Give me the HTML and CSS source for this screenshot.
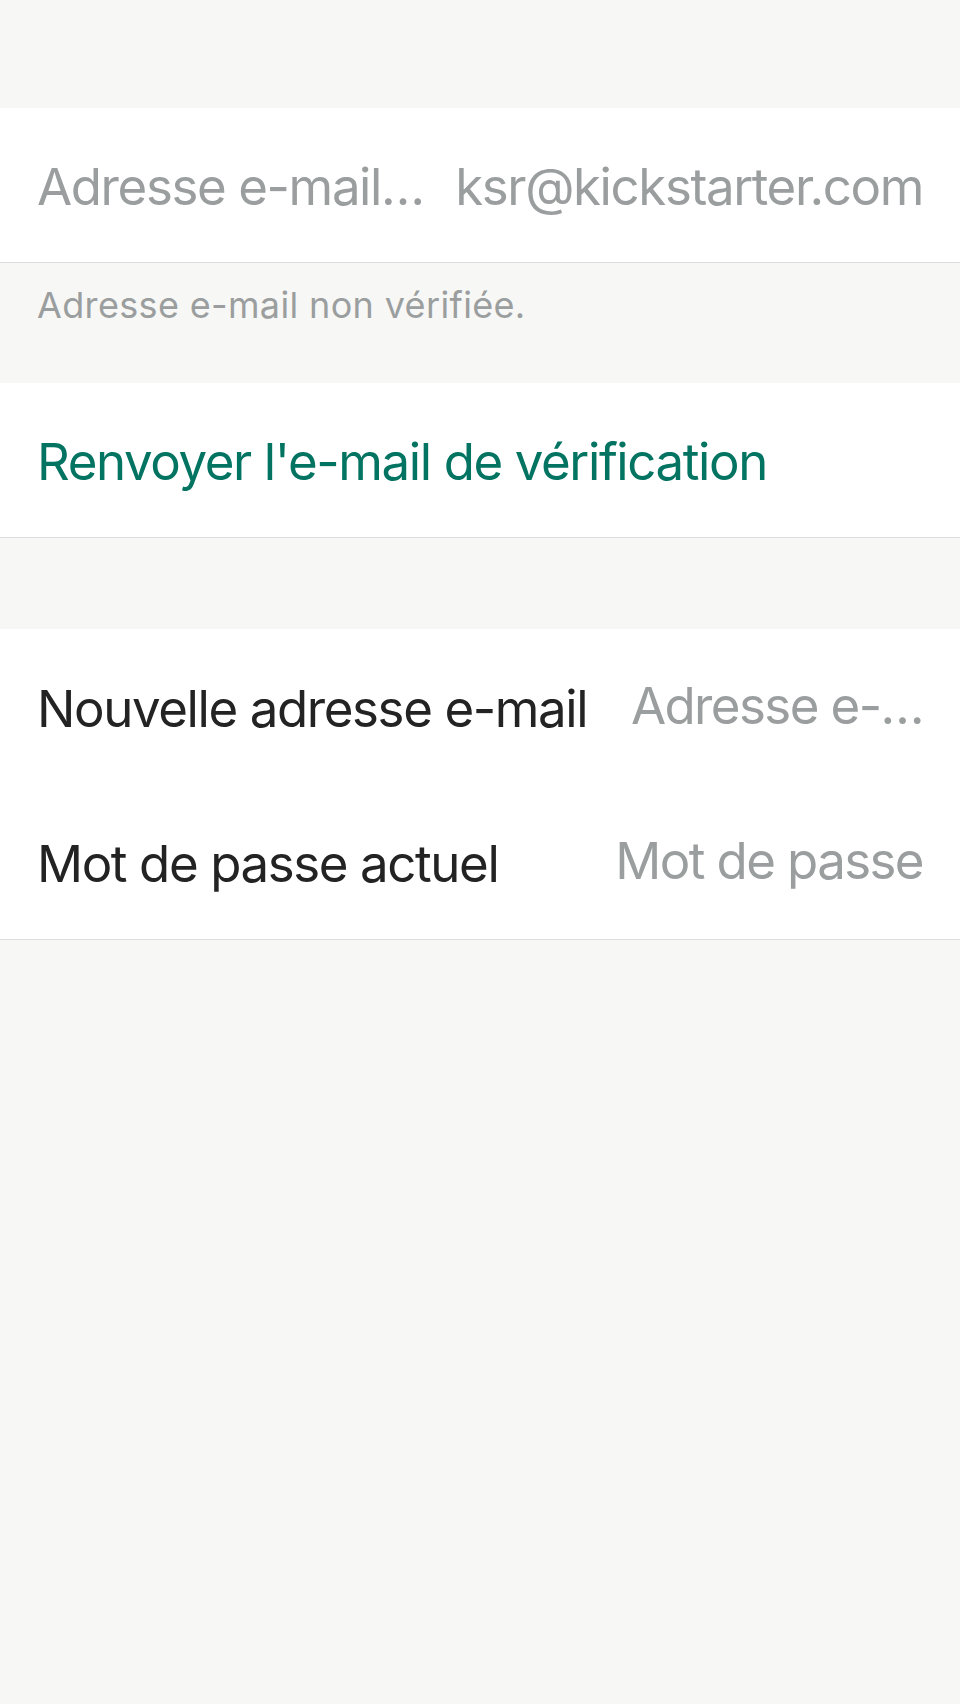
FILE: index.html
```html
<!DOCTYPE html>
<html lang="fr">
<head>
<meta charset="utf-8">
<title>Modifier l'adresse e-mail</title>
<link rel="stylesheet" href="styles.css">
</head>
<body>
<main class="screen">
  <div class="spacer-top"></div>
  <section class="group">
    <div class="row row-bordered">
      <span class="label muted">Adresse e-mail…</span>
      <span class="value muted">ksr@kickstarter.com</span>
    </div>
  </section>
  <p class="footnote">Adresse e-mail non vérifiée.</p>
  <section class="group">
    <div class="row row-bordered">
      <span class="action">Renvoyer l'e-mail de vérification</span>
    </div>
  </section>
  <div class="spacer-mid"></div>
  <section class="group group-bordered">
    <div class="row">
      <span class="label">Nouvelle adresse e-mail</span>
      <span class="value placeholder">Adresse e-…</span>
    </div>
    <div class="row">
      <span class="label">Mot de passe actuel</span>
      <span class="value placeholder">Mot de passe</span>
    </div>
  </section>
</main>
</body>
</html>
```

FILE: styles.css
```css
* { box-sizing: border-box; }
html, body {
  margin: 0;
  padding: 0;
  background: #f7f7f6;
}
body {
  font-family: "Inter", "Noto Sans", "Liberation Sans", sans-serif;
  color: #232323;
}
.screen {
  display: flex;
  flex-direction: column;
  min-height: 1704px;
}
.spacer-top { height: 108px; }
.spacer-mid { height: 91px; }
.group {
  background: #ffffff;
  display: flex;
  flex-direction: column;
}
.group-bordered { border-bottom: 1px solid #dcdcdc; }
.row {
  height: 155px;
  padding: 4px 37px 0;
  display: flex;
  align-items: center;
  justify-content: space-between;
  gap: 30px;
  font-size: 51px;
  line-height: 62px;
  letter-spacing: -1.4px;
  white-space: nowrap;
}
.row-bordered {
  border-bottom: 1px solid #dcdcdc;
}
.label { flex: 0 0 auto; }
.value { flex: 0 0 auto; text-align: right; }
.muted, .placeholder { color: #9b9e9e; }
.placeholder { padding-bottom: 6px; letter-spacing: -1.6px; }
.action { color: #037362; }
.footnote {
  margin: 0;
  height: 120px;
  padding: 20px 37px 0;
  font-size: 36px;
  line-height: 44px;
  letter-spacing: 0.35px;
  color: #9b9e9e;
}
```
